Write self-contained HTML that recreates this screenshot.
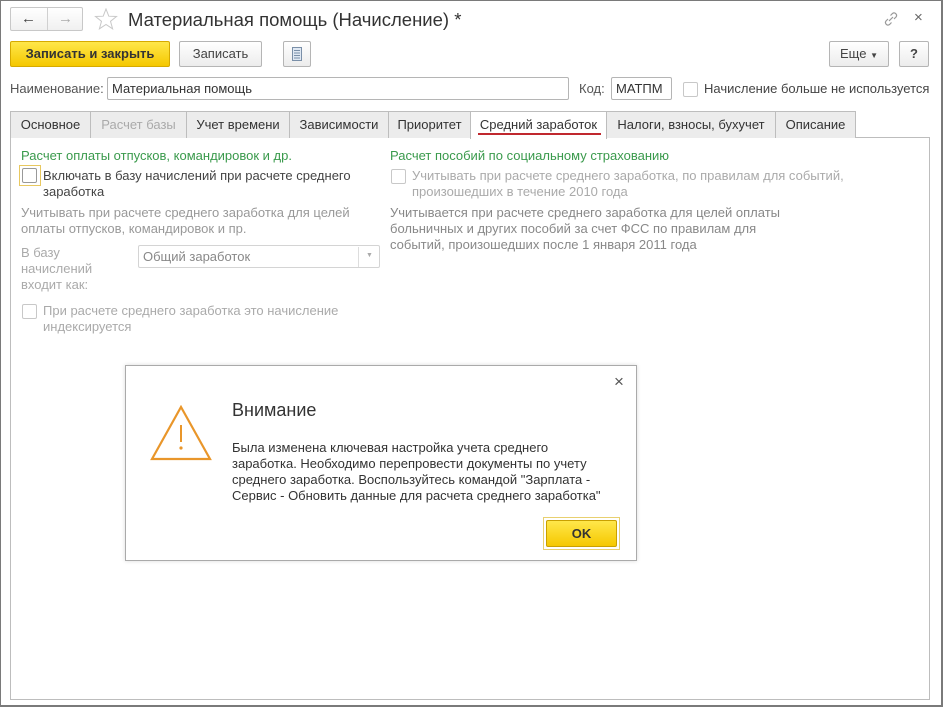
<!DOCTYPE html>
<html><head><meta charset="utf-8"><style>
*{box-sizing:border-box;margin:0;padding:0}
body{width:943px;height:707px;position:relative;background:#fff;font-family:"Liberation Sans",Arial,sans-serif;font-size:13px;color:#333;overflow:hidden}
.abs{position:absolute}
.win{position:absolute;left:0;top:0;width:943px;height:707px;border:1px solid #7a7a7a;border-width:1px 2px 2px 1px}
.btn{position:absolute;border:1px solid #b5b5b5;border-radius:2px;background:linear-gradient(#fff,#ececec);height:26px;line-height:24px;text-align:center;font-size:13px;color:#444}
.tab{position:absolute;top:111px;height:27px;line-height:26px;border:1px solid #bdbdbd;border-bottom:none;background:#ececec;text-align:center;font-size:13px;color:#333}
.g{color:#aaa}
.green{color:#3a9a4c}
.cb{position:absolute;width:15px;height:15px;border:1px solid #c8c8c8;border-radius:2px;background:#fff}
.inp{position:absolute;height:23px;border:1px solid #b5b5b5;border-radius:2px;background:#fff;line-height:21px;padding-left:4px}
.t{position:absolute;line-height:16px}
</style></head><body>
<div class="win"></div>
<div class="abs" style="left:10px;top:7px;width:73px;height:24px;border:1px solid #c8c8c8;border-radius:2px;background:linear-gradient(#fff,#f0f0f0)"></div>
<div class="abs" style="left:47px;top:8px;width:1px;height:22px;background:#d0d0d0"></div>
<div class="abs" style="left:21px;top:10px;font-size:15px;color:#444;font-weight:bold">&#8592;</div>
<div class="abs" style="left:58px;top:10px;font-size:15px;color:#aaa;font-weight:bold">&#8594;</div>
<svg class="abs" style="left:94px;top:8px" width="24" height="22" viewBox="0 0 24 22"><polygon points="12,1 14.8,8.2 22.5,8.5 16.5,13.3 18.6,20.8 12,16.5 5.4,20.8 7.5,13.3 1.5,8.5 9.2,8.2" fill="none" stroke="#c8c8c8" stroke-width="1"/></svg>
<div class="abs" style="left:128px;top:8px;font-size:18.5px;color:#333;line-height:24px">Материальная помощь (Начисление) *</div>
<svg class="abs" style="left:882px;top:10px" width="18" height="18" viewBox="0 0 18 18"><path d="M7 11l4-4M8.5 5.5l2-2a2.5 2.5 0 013.5 3.5l-2 2M9.5 12.5l-2 2A2.5 2.5 0 014 11l2-2" fill="none" stroke="#999" stroke-width="1.2"/></svg>
<div class="abs" style="left:914px;top:9px;font-size:15px;color:#666">&#215;</div>
<div class="btn" style="left:10px;top:41px;width:160px;background:linear-gradient(#ffe74a,#f5c800);border-color:#d6aa00;font-weight:bold;color:#333">Записать и закрыть</div>
<div class="btn" style="left:179px;top:41px;width:83px">Записать</div>
<div class="btn" style="left:283px;top:41px;width:28px"><svg width="12" height="16" viewBox="0 0 12 16" style="margin-top:4px"><rect x="1.5" y="1.5" width="9" height="13" fill="#dfe8f3" stroke="#7a8fa8"/><path d="M3 4.5h6M3 7h6M3 9.5h6M3 12h6" stroke="#7a8fa8"/></svg></div>
<div class="btn" style="left:829px;top:41px;width:60px">Еще <span style="font-size:8px">&#9660;</span></div>
<div class="btn" style="left:899px;top:41px;width:30px;font-weight:bold">?</div>
<div class="t" style="left:10px;top:81px;color:#555">Наименование:</div>
<div class="inp" style="left:107px;top:77px;width:462px">Материальная помощь</div>
<div class="t" style="left:579px;top:81px;color:#555">Код:</div>
<div class="inp" style="left:611px;top:77px;width:61px">МАТПМ</div>
<div class="cb" style="left:683px;top:82px"></div>
<div class="t" style="left:704px;top:81px;color:#444">Начисление больше не используется</div>
<div class="abs" style="left:10px;top:137px;width:920px;height:563px;border:1px solid #bdbdbd"></div>
<div class="tab" style="left:10px;width:81px">Основное</div>
<div class="tab g" style="left:90px;width:97px">Расчет базы</div>
<div class="tab" style="left:186px;width:104px">Учет времени</div>
<div class="tab" style="left:289px;width:100px">Зависимости</div>
<div class="tab" style="left:388px;width:83px">Приоритет</div>
<div class="tab" style="left:470px;width:137px;background:#fff;height:28px">Средний заработок</div>
<div class="abs" style="left:478px;top:133px;width:123px;height:2px;background:#c0282e"></div>
<div class="tab" style="left:606px;width:170px">Налоги, взносы, бухучет</div>
<div class="tab" style="left:775px;width:81px">Описание</div>
<div class="t green" style="left:21px;top:148px">Расчет оплаты отпусков, командировок и др.</div>
<div class="abs" style="left:19px;top:165px;width:22px;height:21px;border:1px solid #e8c860"></div>
<div class="cb" style="left:22px;top:168px;border-color:#999"></div>
<div class="t" style="left:43px;top:168px;color:#444">Включать в базу начислений при расчете среднего<br>заработка</div>
<div class="t g" style="left:21px;top:205px;color:#999">Учитывать при расчете среднего заработка для целей<br>оплаты отпусков, командировок и пр.</div>
<div class="t g" style="left:21px;top:245px">В базу<br>начислений<br>входит как:</div>
<div class="inp" style="left:138px;top:245px;width:242px;color:#888;border-color:#d4d4d4">Общий заработок</div>
<div class="abs" style="left:358px;top:247px;width:1px;height:20px;background:#ddd"></div>
<div class="abs" style="left:366px;top:252px;font-size:7px;color:#aaa">&#9660;</div>
<div class="cb" style="left:22px;top:304px"></div>
<div class="t g" style="left:43px;top:303px">При расчете среднего заработка это начисление<br>индексируется</div>
<div class="t green" style="left:390px;top:148px">Расчет пособий по социальному страхованию</div>
<div class="cb" style="left:391px;top:169px"></div>
<div class="t g" style="left:412px;top:168px">Учитывать при расчете среднего заработка, по правилам для событий,<br>произошедших в течение 2010 года</div>
<div class="t" style="left:390px;top:205px;color:#888">Учитывается при расчете среднего заработка для целей оплаты<br>больничных и других пособий за счет ФСС по правилам для<br>событий, произошедших после 1 января 2011 года</div>
<div class="abs" style="left:125px;top:365px;width:512px;height:196px;border:1px solid #aaa;background:#fff;box-shadow:0 0 4px rgba(0,0,0,.15)"></div>
<div class="abs" style="left:614px;top:372px;font-size:17px;color:#555">&#215;</div>
<svg class="abs" style="left:150px;top:405px" width="62" height="56" viewBox="0 0 62 56"><path d="M31 2L60 54H2Z" fill="none" stroke="#e9962a" stroke-width="2.2" stroke-linejoin="miter"/><path d="M31 20v17" stroke="#e9962a" stroke-width="2"/><circle cx="31" cy="43" r="1.6" fill="#e9962a"/></svg>
<div class="abs" style="left:232px;top:400px;font-size:18px;color:#333">Внимание</div>
<div class="t" style="left:232px;top:440px;color:#333">Была изменена ключевая настройка учета среднего<br>заработка. Необходимо перепровести документы по учету<br>среднего заработка. Воспользуйтесь командой "Зарплата -<br>Сервис - Обновить данные для расчета среднего заработка"</div>
<div class="abs" style="left:543px;top:517px;width:77px;height:33px;border:1px solid #e8d070"></div>
<div class="btn" style="left:546px;top:520px;width:71px;height:27px;line-height:25px;background:linear-gradient(#ffe74a,#f5c800);border-color:#c9a000;font-weight:bold;color:#333">OK</div>
</body></html>
